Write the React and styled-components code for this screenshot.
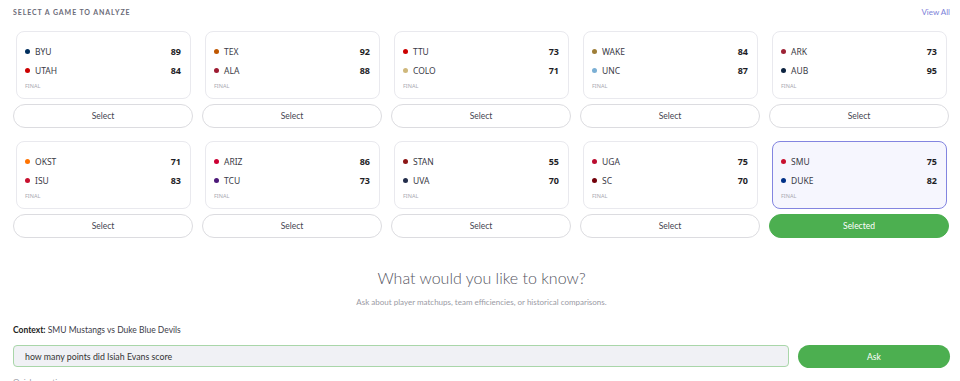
import React, { useState } from 'react'
import styled, { createGlobalStyle } from 'styled-components'

const GlobalStyle = createGlobalStyle`
    body {
        margin: 0;
        background: #ffffff;
        font-family: "Lato", "Open Sans", sans-serif;
        color: #333;
    }
`

const green = '#4caf50'

const games = [
    { id: 1, home: { abbr: 'BYU', color: '#002e5d', score: 89 }, away: { abbr: 'UTAH', color: '#cc0000', score: 84 } },
    { id: 2, home: { abbr: 'TEX', color: '#bf5700', score: 92 }, away: { abbr: 'ALA', color: '#9e1b32', score: 88 } },
    { id: 3, home: { abbr: 'TTU', color: '#cc0000', score: 73 }, away: { abbr: 'COLO', color: '#cfb87c', score: 71 } },
    { id: 4, home: { abbr: 'WAKE', color: '#9e7e38', score: 84 }, away: { abbr: 'UNC', color: '#7bafd4', score: 87 } },
    { id: 5, home: { abbr: 'ARK', color: '#9d2235', score: 73 }, away: { abbr: 'AUB', color: '#0c2340', score: 95 } },
    { id: 6, home: { abbr: 'OKST', color: '#ff7300', score: 71 }, away: { abbr: 'ISU', color: '#c8102e', score: 83 } },
    { id: 7, home: { abbr: 'ARIZ', color: '#cc0033', score: 86 }, away: { abbr: 'TCU', color: '#4d1979', score: 73 } },
    { id: 8, home: { abbr: 'STAN', color: '#8c1515', score: 55 }, away: { abbr: 'UVA', color: '#232d4b', score: 70 } },
    { id: 9, home: { abbr: 'UGA', color: '#ba0c2f', score: 75 }, away: { abbr: 'SC', color: '#73000a', score: 70 } },
    { id: 10, home: { abbr: 'SMU', color: '#c8102e', score: 75 }, away: { abbr: 'DUKE', color: '#003087', score: 82 } },
]

const Page = styled.div`
    padding: 0 10px 0 13px;
`

const HeaderRow = styled.div`
    display: flex;
    justify-content: space-between;
    align-items: center;
    height: 24px;
    margin-bottom: 7px;
`

const SectionLabel = styled.h2`
    margin: 0;
    font-size: 7px;
    font-weight: 700;
    letter-spacing: 0.9px;
    color: #6b6b78;
    text-transform: uppercase;
`

const ViewAll = styled.a`
    font-size: 8px;
    color: #7c7fd8;
    cursor: pointer;
`

const Grid = styled.div`
    display: grid;
    grid-template-columns: repeat(5, 180px);
    column-gap: 9px;
    row-gap: 13px;
`

const Cell = styled.div`
    display: flex;
    flex-direction: column;
`

const Card = styled.div`
    margin: 0 2px 0 3px;
    height: 68px;
    box-sizing: border-box;
    padding: 10px 9px 9px 8px;
    border-radius: 8px;
    border: ${props => props.selected ? '1.5px solid #8385e0' : '1px solid #e9e9ee'};
    background: ${props => props.selected ? '#f6f6fe' : '#ffffff'};
`

const TeamRow = styled.div`
    display: flex;
    align-items: center;
    height: 19px;
`

const Dot = styled.span`
    width: 5px;
    height: 5px;
    border-radius: 50%;
    background: ${props => props.color};
    margin-right: 5px;
`

const TeamName = styled.span`
    flex: 1;
    font-family: "Noto Sans", sans-serif;
    font-size: 8.5px;
    color: #3a3a46;
`

const Score = styled.span`
    font-family: "Noto Sans", sans-serif;
    font-size: 9px;
    font-weight: 700;
    color: #1e1e26;
`

const Status = styled.div`
    margin-top: 1px;
    font-family: "Noto Sans", sans-serif;
    font-size: 5.5px;
    line-height: 10px;
    color: #a8a8b0;
`

const SelectButton = styled.button`
    margin-top: 5px;
    height: 24px;
    border-radius: 12px;
    border: 1px solid ${props => props.selected ? green : '#dcdce0'};
    background: ${props => props.selected ? green : '#ffffff'};
    color: ${props => props.selected ? '#ffffff' : '#444450'};
    font-family: "Lato", sans-serif;
    font-size: 8.5px;
    cursor: pointer;
`

const AskSection = styled.div`
    margin-top: 28px;
    text-align: center;
`

const Title = styled.h1`
    margin: 0;
    font-size: 16px;
    line-height: 24px;
    font-weight: 300;
    color: #55555f;
`

const Subtitle = styled.p`
    margin: 6px 0 0;
    font-size: 8px;
    line-height: 12px;
    color: #9a9aa4;
`

const Context = styled.div`
    margin-top: 16px;
    font-size: 8.5px;
    line-height: 12px;
    color: #3c3c48;
    b {
        font-weight: 700;
        color: #222;
    }
`

const AskRow = styled.div`
    display: flex;
    gap: 9px;
    margin-top: 9px;
`

const QuestionInput = styled.input`
    flex: 1;
    height: 22px;
    box-sizing: border-box;
    padding: 0 11px;
    border-radius: 4px;
    border: 1px solid #a9d6a9;
    background: #f0f1f5;
    font-family: "Lato", sans-serif;
    font-size: 8.8px;
    color: #333;
    outline: none;
`

const AskButton = styled.button`
    width: 152px;
    height: 23px;
    border: none;
    border-radius: 12px;
    background: ${green};
    color: #ffffff;
    font-family: "Lato", sans-serif;
    font-size: 8.5px;
    cursor: pointer;
`

const QuickLabel = styled.div`
    margin-top: 9px;
    font-size: 8px;
    color: #9a9aa4;
`

export default function App() {
    const [selected, setSelected] = useState(10)
    const [question, setQuestion] = useState('how many points did Isiah Evans score')

    return (
        <>
            <GlobalStyle />
            <Page>
                <HeaderRow>
                    <SectionLabel>Select a game to analyze</SectionLabel>
                    <ViewAll>View All</ViewAll>
                </HeaderRow>
                <Grid>
                    {games.map(g => {
                        const isSel = g.id === selected
                        return (
                            <Cell key={g.id}>
                                <Card selected={isSel}>
                                    {[g.home, g.away].map(t => (
                                        <TeamRow key={t.abbr}>
                                            <Dot color={t.color} />
                                            <TeamName>{t.abbr}</TeamName>
                                            <Score>{t.score}</Score>
                                        </TeamRow>
                                    ))}
                                    <Status>FINAL</Status>
                                </Card>
                                <SelectButton selected={isSel} onClick={() => setSelected(g.id)}>
                                    {isSel ? 'Selected' : 'Select'}
                                </SelectButton>
                            </Cell>
                        )
                    })}
                </Grid>
                <AskSection>
                    <Title>What would you like to know?</Title>
                    <Subtitle>Ask about player matchups, team efficiencies, or historical comparisons.</Subtitle>
                </AskSection>
                <Context><b>Context:</b> SMU Mustangs vs Duke Blue Devils</Context>
                <AskRow>
                    <QuestionInput value={question} onChange={e => setQuestion(e.target.value)} />
                    <AskButton>Ask</AskButton>
                </AskRow>
                <QuickLabel>Quick questions</QuickLabel>
            </Page>
        </>
    )
}
